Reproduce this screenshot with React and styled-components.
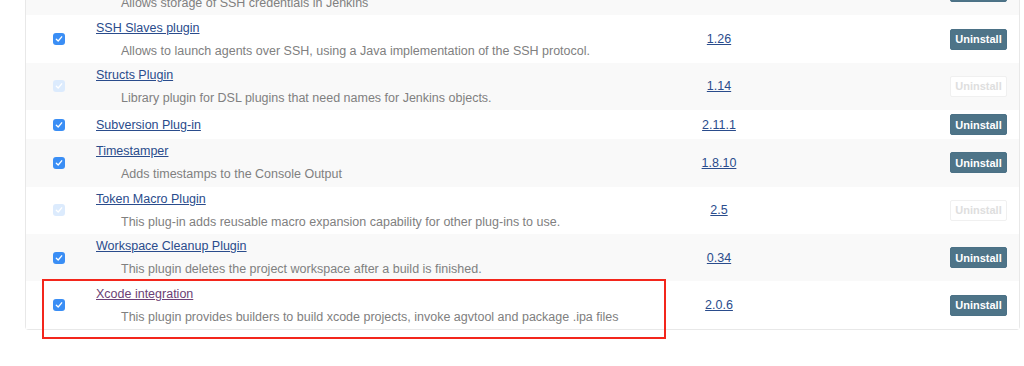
import React from "react";
import styled, {createGlobalStyle} from "styled-components";

const GlobalStyle = createGlobalStyle`
  html, body {
    margin: 0;
    padding: 0;
    background: #fff;
    font-family: "Liberation Sans", Arial, sans-serif;
  }
`;

const Viewport = styled.div`
  position: relative;
  height: 366px;
  overflow: hidden;
`;

const Panel = styled.div`
  margin: -32px 4px 0 25px;
  border: 1px solid #e8e8e8;
  border-top: none;
  border-radius: 0 0 4px 4px;
`;

const Row = styled.div`
  display: grid;
  grid-template-columns: 66px 1fr 120px 240px;
  align-items: center;
  height: ${p => p.$short ? "29px" : "47.4px"};
  background: ${p => p.$striped ? "#f9f9f9" : "#fff"};
`;

const CheckCell = styled.div`
  display: flex;
  justify-content: center;
`;

const Check = styled.span`
  width: 12px;
  height: 12px;
  border-radius: 3px;
  background: ${p => p.$disabled ? "#dcebfd" : "#3a8ef5"};
  display: flex;
  align-items: center;
  justify-content: center;
`;

const NameCell = styled.div`
  display: flex;
  flex-direction: column;
  gap: 9px;
  padding-left: 4px;
`;

const Name = styled.a`
  font-size: 12.5px;
  color: ${p => p.$visited ? "#6c3f76" : "#2a4c8c"};
  text-decoration: underline;
  line-height: 14px;
`;

const Desc = styled.div`
  font-size: 12.5px;
  color: #808080;
  padding-left: 25px;
  line-height: 14px;
`;

const Version = styled.a`
  justify-self: center;
  font-size: 12.5px;
  color: #2a4c8c;
  text-decoration: underline;
`;

const ButtonCell = styled.div`
  display: flex;
  justify-content: flex-end;
  padding-right: 12px;
`;

const UninstallButton = styled.button`
  width: 57px;
  height: 21px;
  padding: 0;
  font-family: "Liberation Sans", Arial, sans-serif;
  font-size: 11px;
  font-weight: bold;
  border-radius: 2px;
  border: 1px solid ${p => p.disabled ? "#f0f0f0" : "#4b7186"};
  background: ${p => p.disabled ? "#fff" : "#4e7488"};
  color: ${p => p.disabled ? "#dedede" : "#fff"};
`;

const Highlight = styled.div`
  position: absolute;
  left: 42px;
  top: 279px;
  width: 620px;
  height: 56px;
  border: 2.5px solid #f3261c;
  pointer-events: none;
`;

const plugins = [
  {desc: "Allows storage of SSH credentials in Jenkins", version: "1.4", name: "SSH Credentials Plugin"},
  {name: "SSH Slaves plugin", desc: "Allows to launch agents over SSH, using a Java implementation of the SSH protocol.", version: "1.26"},
  {name: "Structs Plugin", desc: "Library plugin for DSL plugins that need names for Jenkins objects.", version: "1.14", locked: true},
  {name: "Subversion Plug-in", version: "2.11.1"},
  {name: "Timestamper", desc: "Adds timestamps to the Console Output", version: "1.8.10"},
  {name: "Token Macro Plugin", desc: "This plug-in adds reusable macro expansion capability for other plug-ins to use.", version: "2.5", locked: true},
  {name: "Workspace Cleanup Plugin", desc: "This plugin deletes the project workspace after a build is finished.", version: "0.34"},
  {name: "Xcode integration", desc: "This plugin provides builders to build xcode projects, invoke agvtool and package .ipa files", version: "2.0.6", visited: true},
];

const Tick = () => (
  <svg width="8" height="8" viewBox="0 0 8 8">
    <path d="M1.3 4.2 L3.2 6 L6.7 1.8" fill="none" stroke="#fff" strokeWidth="1.3" strokeLinecap="round" strokeLinejoin="round"/>
  </svg>
);

export default function App() {
  return (
    <Viewport>
      <GlobalStyle/>
      <Panel>
        {plugins.map((p, i) => (
          <Row key={p.name} $striped={i % 2 === 0} $short={!p.desc}>
            <CheckCell>
              <Check $disabled={p.locked}><Tick/></Check>
            </CheckCell>
            <NameCell>
              <Name href="#" $visited={p.visited}>{p.name}</Name>
              {p.desc && <Desc>{p.desc}</Desc>}
            </NameCell>
            <Version href="#">{p.version}</Version>
            <ButtonCell>
              <UninstallButton disabled={p.locked}>Uninstall</UninstallButton>
            </ButtonCell>
          </Row>
        ))}
      </Panel>
      <Highlight/>
    </Viewport>
  );
}
